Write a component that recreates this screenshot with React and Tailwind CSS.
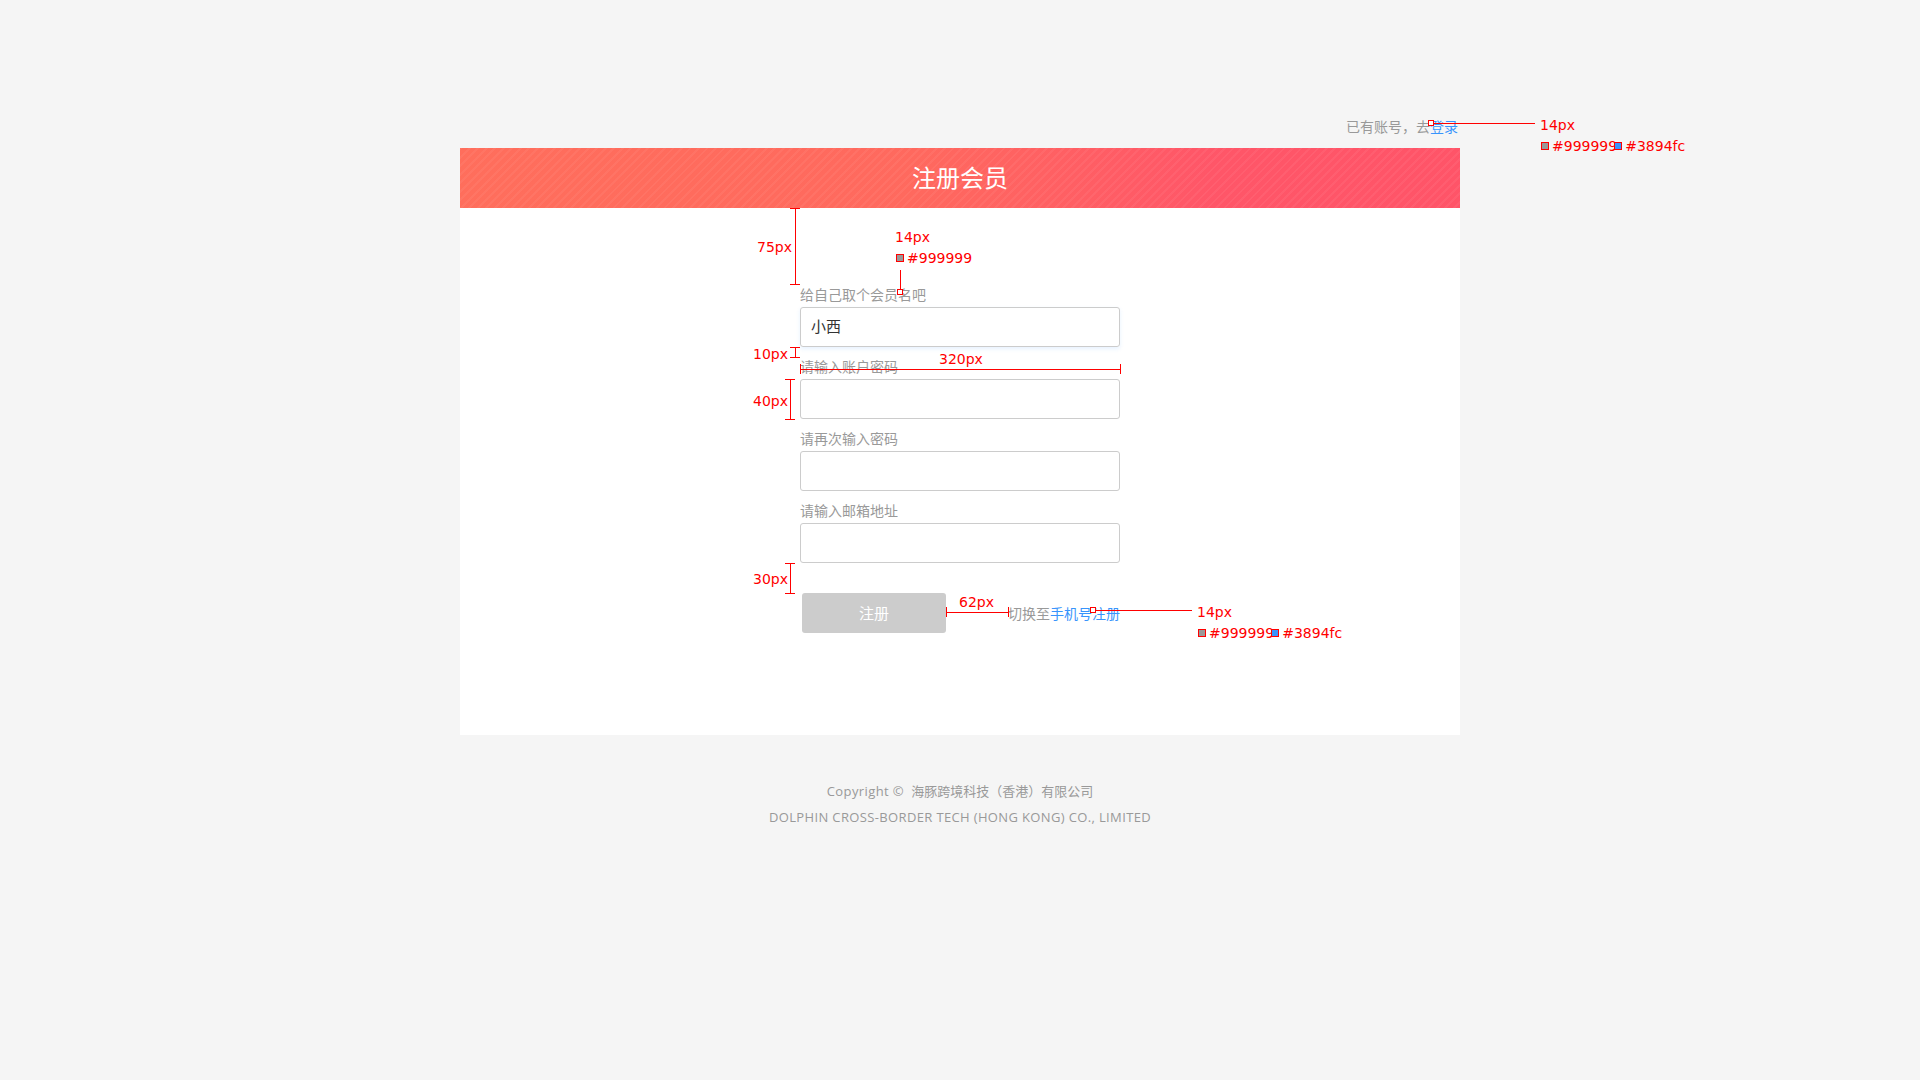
import React from 'react';

const fields = [
    { label: '给自己取个会员名吧', value: '小西', active: true },
    { label: '请输入账户密码', value: '' },
    { label: '请再次输入密码', value: '' },
    { label: '请输入邮箱地址', value: '' },
];

// red spec markers drawn over the design
const Mark = ({ className }) => (
    <div className={`absolute w-[6px] h-[6px] border border-[#ff0000] bg-white ${className}`} />
);

const Note = ({ className, children }) => (
    <div className={`absolute h-[20px] leading-[20px] whitespace-nowrap text-[14px] text-[#ff0000] ${className}`}>
        {children}
    </div>
);

const Swatches = ({ className, blue }) => (
    <div className={`absolute h-[20px] flex items-center whitespace-nowrap text-[14px] text-[#ff0000] ${className}`}>
        <span className="w-[8px] h-[8px] border-[1.5px] border-[#ff0000] bg-[#999999]" />
        <span className="ml-[3px]">#999999</span>
        {blue && (
            <>
                <span className="-ml-[3px] w-[8px] h-[8px] border-[1.5px] border-[#ff0000] bg-[#3894fc]" />
                <span className="ml-[3px]">#3894fc</span>
            </>
        )}
    </div>
);

const VDim = ({ className }) => (
    <div className={`absolute w-[10px] flex flex-col items-center ${className}`}>
        <div className="w-full h-[1px] bg-[#ff0000]" />
        <div className="flex-1 w-[1px] bg-[#ff0000]" />
        <div className="w-full h-[1px] bg-[#ff0000]" />
    </div>
);

const HDim = ({ className }) => (
    <div className={`absolute h-[10px] flex items-center ${className}`}>
        <div className="h-full w-[1px] bg-[#ff0000]" />
        <div className="flex-1 h-[1px] bg-[#ff0000]" />
        <div className="h-full w-[1px] bg-[#ff0000]" />
    </div>
);

const Annotations = () => (
    <div className="absolute inset-0 pointer-events-none font-['DejaVu_Sans',sans-serif]">
        {/* top right login link */}
        <Mark className="left-[1428px] top-[120px]" />
        <div className="absolute left-[1434px] top-[123px] w-[101px] h-[1px] bg-[#ff0000]" />
        <Note className="left-[1540px] top-[115px]">14px</Note>
        <Swatches className="left-[1541px] top-[136px]" blue />

        {/* label spec */}
        <Note className="left-[895px] top-[227px]">14px</Note>
        <Swatches className="left-[896px] top-[248px]" />
        <div className="absolute left-[900px] top-[270px] w-[1px] h-[19px] bg-[#ff0000]" />
        <Mark className="left-[897px] top-[289px]" />

        {/* vertical spacing */}
        <VDim className="left-[790px] top-[208px] h-[77px]" />
        <Note className="left-[757px] top-[237px]">75px</Note>
        <VDim className="left-[790px] top-[347px] h-[11px]" />
        <Note className="left-[753px] top-[344px]">10px</Note>
        <VDim className="left-[785px] top-[379px] h-[41px]" />
        <Note className="left-[753px] top-[391px]">40px</Note>
        <VDim className="left-[785px] top-[563px] h-[31px]" />
        <Note className="left-[753px] top-[569px]">30px</Note>

        {/* input width */}
        <HDim className="left-[800px] top-[364px] w-[321px]" />
        <Note className="left-[939px] top-[349px]">320px</Note>

        {/* button to switch link */}
        <HDim className="left-[946px] top-[607px] w-[63px]" />
        <Note className="left-[959px] top-[592px]">62px</Note>

        {/* switch link spec */}
        <Mark className="left-[1090px] top-[607px]" />
        <div className="absolute left-[1096px] top-[610px] w-[96px] h-[1px] bg-[#ff0000]" />
        <Note className="left-[1197px] top-[602px]">14px</Note>
        <Swatches className="left-[1198px] top-[623px]" blue />
    </div>
);

const App = () => {
    return (
        <div className="relative min-h-screen bg-[#f5f5f5] font-['Noto_Sans_CJK_SC',sans-serif]">
            <div className="w-[1000px] mx-auto pt-[116px] pb-[100px]">
                {/* Top link */}
                <div className="flex justify-end h-[22px] leading-[20px] text-[14px] text-[#999999]">
                    <span>已有账号，去</span>
                    <a className="text-[#3894fc] mr-[2px]">登录</a>
                </div>

                {/* Register card */}
                <div className="mt-[10px] bg-white">
                    <div className="relative h-[60px] overflow-hidden bg-[linear-gradient(90deg,#ff6e5c_0%,#ff695e_45%,#ff5668_75%,#ff5468_100%)]">
                        <div className="absolute inset-0 bg-[repeating-linear-gradient(135deg,rgba(255,255,255,0.05)_0px,rgba(255,255,255,0.05)_2px,transparent_2px,transparent_6px)]" />
                        <div className="relative h-full pb-[2px] flex items-center justify-center text-white text-[24px]">
                            注册会员
                        </div>
                    </div>

                    <div className="pt-[77px] pb-[102px]">
                        <div className="w-[320px] mx-auto flex flex-col gap-[10px]">
                            {fields.map((f) => (
                                <div key={f.label}>
                                    <div className="h-[22px] leading-[18px] text-[14px] text-[#999999]">{f.label}</div>
                                    <input
                                        defaultValue={f.value}
                                        className={`block w-full h-[40px] px-[10px] pb-[3px] border border-[#cccccc] rounded-[3px] text-[15px] text-[#333333] outline-none ${f.active ? 'shadow-[0_2px_4px_rgba(56,148,252,0.12)]' : ''}`}
                                    />
                                </div>
                            ))}

                            <div className="mt-[20px] flex items-center">
                                <button className="ml-[2px] w-[144px] h-[40px] bg-[#cccccc] rounded-[3px] text-white text-[15px]">
                                    注册
                                </button>
                                <div className="ml-auto text-[14px] text-[#999999]">
                                    切换至<a className="text-[#3894fc]">手机号注册</a>
                                </div>
                            </div>
                        </div>
                    </div>
                </div>

                {/* Footer */}
                <div className="mt-[43px] text-center text-[13px] leading-[26px] text-[#999999] font-['Open_Sans','Noto_Sans_CJK_SC',sans-serif]">
                    <p><span className="tracking-[0.4px]">Copyright ©&nbsp;</span> 海豚跨境科技（香港）有限公司</p>
                    <p className="tracking-[0.36px]">DOLPHIN CROSS-BORDER TECH (HONG KONG) CO., LIMITED</p>
                </div>
            </div>

            <Annotations />
        </div>
    );
};

export default App;
